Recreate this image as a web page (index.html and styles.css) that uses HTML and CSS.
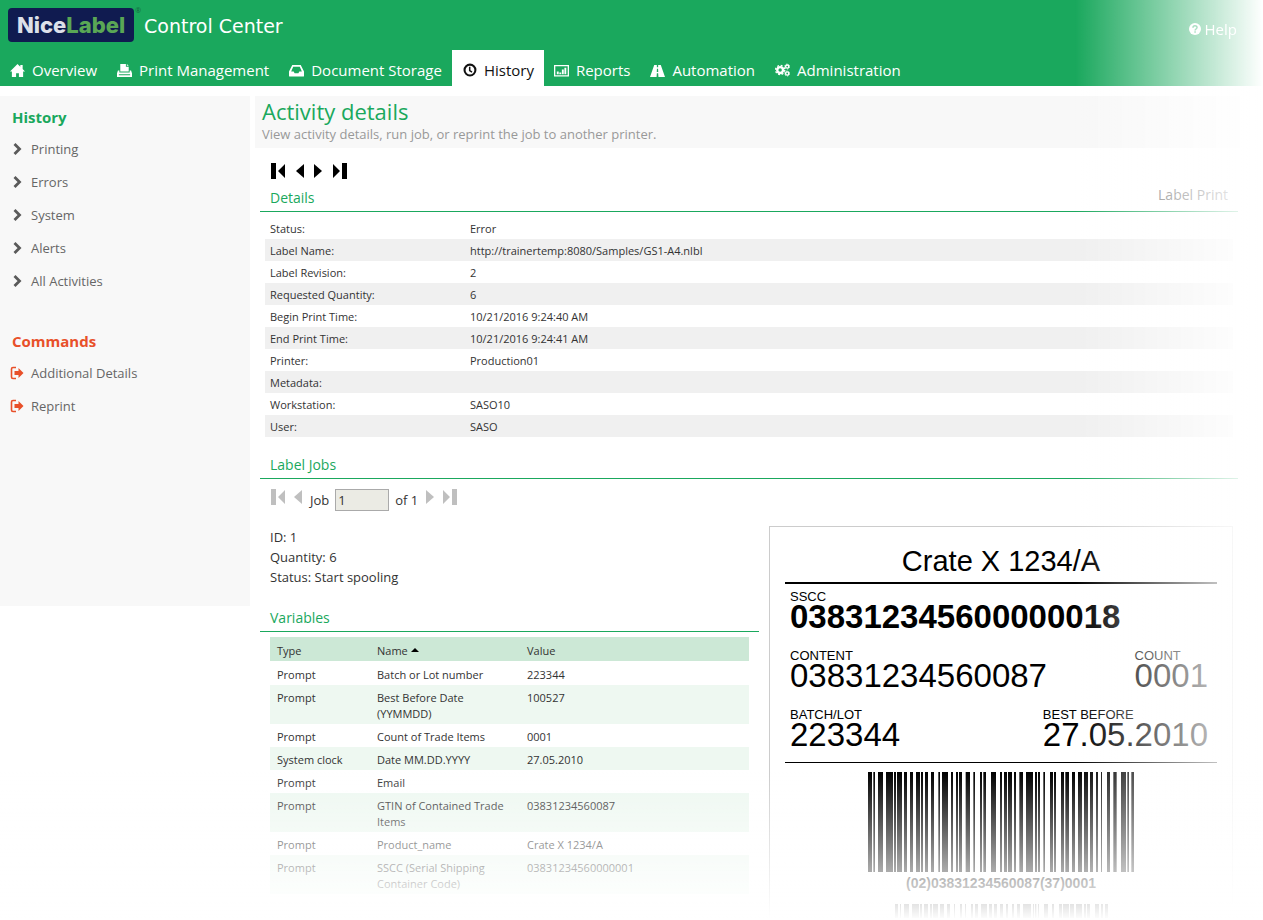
FILE: index.html
```
<!DOCTYPE html>
<html lang="en">
<head>
  <meta charset="UTF-8">
  <title>Control Center - Activity details</title>
  <meta name="viewport" content="width=device-width,initial-scale=1">
  <link rel="stylesheet" href="styles.css">
</head>
<body>
  <header class="header">
    <div class="brand">
      <div class="logo">Nice<span class="logo-accent">Label</span><span class="logo-reg">®</span></div>
      <div class="brand-name">Control Center</div>
      <a class="help" href="#">
        <svg class="help-icon" viewBox="0 0 16 16"><circle cx="8" cy="8" r="8" fill="#fff"/><path d="M5.3 6.2c0-3.4 5.4-3.3 5.4-.2 0 2-2.6 2-2.6 4M8.1 11v2.1" fill="none" stroke="#a9dfc1" stroke-width="2"/></svg>
        Help
      </a>
    </div>
    <nav class="nav">
      <a href="#"><svg viewBox="0 0 16 16"><path d="M8 1l3 3V2h2.500v4.500L16 9h-2v6H9.500v-4h-3v4H2V9H0z"/></svg>Overview</a>
      <a href="#"><svg viewBox="0 0 16 16"><path d="M3.500 1h6v3h3v5h-9zM10.500 1l2 2h-2zM1 8h1.500v2h11V8H15l1 3v4H0v-4zM2 12v1h12v-1z" fill-rule="evenodd"/></svg>Print Management</a>
      <a href="#"><svg viewBox="0 0 16 16"><path d="M3.500 2h9L16 9v4.500c0 .8-.3 1-1 1H1c-.7 0-1-.3-1-1V9zM4.500 4L2.300 9H5l1 2h4l1-2h2.700l-2.200-5z" fill-rule="evenodd"/></svg>Document Storage</a>
      <a href="#" class="active"><svg viewBox="0 0 16 16"><circle cx="8.500" cy="7.500" r="5.800" fill="none" stroke="currentColor" stroke-width="2.200"/><path d="M8.200 4v4l2.500 1.700" fill="none" stroke="currentColor" stroke-width="1.600"/></svg>History</a>
      <a href="#"><svg viewBox="0 0 16 16"><path d="M0 2h16v12.500H0zM1.400 3.400v9.700h13.200V3.400zM3 9h2v3H3zM5.700 10h2v2h-2zM8.400 7h2v5h-2zM11.100 5h2v7h-2z" fill-rule="evenodd"/></svg>Reports</a>
      <a href="#"><svg viewBox="0 0 16 16"><path d="M4.500 2h2.800v2.500h1.400V2h2.800L16 15H9l-.3-4H7.300L7 15H0zM7.400 6l-.2 3.500h1.600L8.600 6z" fill-rule="evenodd"/></svg>Automation</a>
      <a href="#"><svg viewBox="0 0 16 16"><circle cx="5.500" cy="7.500" r="3.100" fill="none" stroke="currentColor" stroke-width="2.600"/><circle cx="5.500" cy="7.500" r="4.900" fill="none" stroke="currentColor" stroke-width="1.500" stroke-dasharray="2 1.850"/><circle cx="13" cy="3.800" r="1.700" fill="none" stroke="currentColor" stroke-width="1.500"/><circle cx="13" cy="3.800" r="2.600" fill="none" stroke="currentColor" stroke-dasharray="1.400 1.320"/><circle cx="13" cy="11.200" r="1.700" fill="none" stroke="currentColor" stroke-width="1.500"/><circle cx="13" cy="11.200" r="2.600" fill="none" stroke="currentColor" stroke-dasharray="1.400 1.320"/></svg>Administration</a>
    </nav>
  </header>

  <!-- icons used more than once -->
  <svg class="defs" width="0" height="0">
    <symbol id="chevron" viewBox="0 0 14 14"><path d="M4.500 2l5 5-5 5" fill="none" stroke="#5a5a5a" stroke-width="2.800"/></symbol>
    <symbol id="out" viewBox="0 0 14 14"><path d="M6 1.500H3Q1.500 1.500 1.500 3v8q0 1.500 1.500 1.500h3" fill="none" stroke="#e8502a" stroke-width="1.600"/><path d="M4.500 5h4V2l5 5-5 5V9h-4z" fill="#e8502a"/></symbol>
    <symbol id="first" viewBox="0 0 15 16"><path d="M0 0h5v16H0zM14 1v14L7 8z"/></symbol>
    <symbol id="prev" viewBox="0 0 8 16"><path d="M8 1v14L0 8z"/></symbol>
    <symbol id="next" viewBox="0 0 8 16"><path d="M0 1v14l8-7z"/></symbol>
    <symbol id="last" viewBox="0 0 15 16"><path d="M15 0h-5v16h5zM1 1v14l7-7z"/></symbol>
  </svg>

  <div class="page">
    <aside class="sidebar">
      <h2 class="side-title">History</h2>
      <ul class="side-list">
        <li><a href="#"><svg><use href="#chevron"/></svg>Printing</a></li>
        <li><a href="#"><svg><use href="#chevron"/></svg>Errors</a></li>
        <li><a href="#"><svg><use href="#chevron"/></svg>System</a></li>
        <li><a href="#"><svg><use href="#chevron"/></svg>Alerts</a></li>
        <li><a href="#"><svg><use href="#chevron"/></svg>All Activities</a></li>
      </ul>
      <h2 class="side-title commands">Commands</h2>
      <ul class="side-list">
        <li><a href="#"><svg><use href="#out"/></svg>Additional Details</a></li>
        <li><a href="#"><svg><use href="#out"/></svg>Reprint</a></li>
      </ul>
    </aside>

    <main class="main">
      <div class="page-head">
        <h1>Activity details</h1>
        <p>View activity details, run job, or reprint the job to another printer.</p>
      </div>

      <div class="content">
        <div class="pager">
          <button type="button" aria-label="First activity"><svg class="wide"><use href="#first"/></svg></button>
          <button type="button" aria-label="Previous activity"><svg><use href="#prev"/></svg></button>
          <button type="button" aria-label="Next activity"><svg><use href="#next"/></svg></button>
          <button type="button" aria-label="Last activity"><svg class="wide"><use href="#last"/></svg></button>
        </div>

        <div class="section-head">
          <h3>Details</h3>
          <span class="kind">Label Print</span>
        </div>
        <table class="details">
          <tr><th>Status:</th><td>Error</td></tr>
          <tr><th>Label Name:</th><td>http://trainertemp:8080/Samples/GS1-A4.nlbl</td></tr>
          <tr><th>Label Revision:</th><td>2</td></tr>
          <tr><th>Requested Quantity:</th><td>6</td></tr>
          <tr><th>Begin Print Time:</th><td>10/21/2016 9:24:40 AM</td></tr>
          <tr><th>End Print Time:</th><td>10/21/2016 9:24:41 AM</td></tr>
          <tr><th>Printer:</th><td>Production01</td></tr>
          <tr><th>Metadata:</th><td></td></tr>
          <tr><th>Workstation:</th><td>SASO10</td></tr>
          <tr><th>User:</th><td>SASO</td></tr>
        </table>

        <div class="section-head">
          <h3>Label Jobs</h3>
        </div>

        <div class="jobs">
          <div class="job">
            <div class="pager job-pager">
              <button type="button" aria-label="First job" disabled><svg class="wide"><use href="#first"/></svg></button>
              <button type="button" aria-label="Previous job" disabled><svg><use href="#prev"/></svg></button>
              <span class="job-no">
                <label for="job">Job</label>
                <input type="text" id="job" value="1">
                <span>of 1</span>
              </span>
              <button type="button" aria-label="Next job" disabled><svg><use href="#next"/></svg></button>
              <button type="button" aria-label="Last job" disabled><svg class="wide"><use href="#last"/></svg></button>
            </div>
            <div class="job-info">
              <div>ID: 1</div>
              <div>Quantity: 6</div>
              <div>Status: Start spooling</div>
            </div>

            <div class="section-head">
              <h3>Variables</h3>
            </div>
            <table class="variables">
              <thead>
                <tr>
                  <th class="col-type">Type</th>
                  <th class="col-name">Name <svg class="sort" viewBox="0 0 8 4"><path d="M4 0l4 4H0z"/></svg></th>
                  <th>Value</th>
                </tr>
              </thead>
              <tbody>
                <tr><td>Prompt</td><td>Batch or Lot number</td><td>223344</td></tr>
                <tr><td>Prompt</td><td>Best Before Date (YYMMDD)</td><td>100527</td></tr>
                <tr><td>Prompt</td><td>Count of Trade Items</td><td>0001</td></tr>
                <tr><td>System clock</td><td>Date MM.DD.YYYY</td><td>27.05.2010</td></tr>
                <tr><td>Prompt</td><td>Email</td><td></td></tr>
                <tr><td>Prompt</td><td>GTIN of Contained Trade Items</td><td>03831234560087</td></tr>
                <tr><td>Prompt</td><td>Product_name</td><td>Crate X 1234/A</td></tr>
                <tr><td>Prompt</td><td>SSCC (Serial Shipping Container Code)</td><td>03831234560000001</td></tr>
              </tbody>
            </table>
          </div>

          <div class="preview">
            <div class="preview-title">Crate X 1234/A</div>
            <div class="preview-body">
              <div class="preview-row">
                <div class="field"><span>SSCC</span><b>038312345600000018</b></div>
              </div>
              <div class="preview-row">
                <div class="field"><span>CONTENT</span>03831234560087</div>
                <div class="field"><span>COUNT</span>0001</div>
              </div>
              <div class="preview-row">
                <div class="field"><span>BATCH/LOT</span>223344</div>
                <div class="field"><span>BEST BEFORE</span>27.05.2010</div>
              </div>
            </div>
            <svg class="barcode" viewBox="0 0 798 300" preserveAspectRatio="none"><path d="M0 0h12v300h-12zM16 0h5v300h-5zM30 0h15v300h-15zM54 0h21v300h-21zM78 0h6v300h-6zM87 0h15v300h-15zM108 0h9v300h-9zM126 0h9v300h-9zM144 0h12v300h-12zM159 0h6v300h-6zM171 0h9v300h-9zM189 0h9v300h-9zM211 0h5v300h-5zM222 0h18v300h-18zM249 0h6v300h-6zM264 0h6v300h-6zM273 0h9v300h-9zM293 0h13v300h-13zM316 0h5v300h-5zM336 0h6v300h-6zM346 0h8v300h-8zM369 0h15v300h-15zM396 0h6v300h-6zM408 0h9v300h-9zM420 0h12v300h-12zM438 0h6v300h-6zM454 0h11v300h-11zM474 0h21v300h-21zM501 0h6v300h-6zM510 0h6v300h-6zM526 0h5v300h-5zM546 0h9v300h-9zM558 0h6v300h-6zM579 0h9v300h-9zM592 0h11v300h-11zM612 0h9v300h-9zM630 0h12v300h-12zM648 0h12v300h-12zM666 0h9v300h-9zM684 0h6v300h-6zM699 0h3v300h-3zM717 0h9v300h-9zM736 0h10v300h-10zM759 0h15v300h-15zM778 0h5v300h-5zM790 0h8v300h-8z"/></svg>
            <div class="barcode-text">(02)03831234560087(37)0001</div>
            <svg class="barcode second" viewBox="0 0 639 45" preserveAspectRatio="none"><path d="M0 0h9v45h-9zM15 0h3v45h-3zM27 0h15v45h-15zM51 0h21v45h-21zM75 0h6v45h-6zM87 0h12v45h-12zM105 0h6v45h-6zM114 0h15v45h-15zM135 0h12v45h-12zM156 0h9v45h-9zM177 0h3v45h-3zM195 0h6v45h-6zM210 0h3v45h-3zM228 0h6v45h-6zM240 0h9v45h-9zM258 0h18v45h-18zM282 0h9v45h-9zM297 0h9v45h-9zM315 0h9v45h-9zM333 0h6v45h-6zM351 0h6v45h-6zM366 0h9v45h-9zM384 0h24v45h-24zM414 0h3v45h-3zM420 0h4v45h-4zM429 0h3v45h-3zM447 0h12v45h-12zM471 0h6v45h-6zM492 0h9v45h-9zM504 0h18v45h-18zM525 0h12v45h-12zM543 0h18v45h-18zM567 0h6v45h-6zM576 0h9v45h-9zM600 0h12v45h-12zM618 0h6v45h-6zM630 0h9v45h-9z"/></svg>
          </div>
        </div>
      </div>
    </main>
  </div>

  <div class="fade-right"></div>
  <div class="fade-bottom"></div>
</body>
</html>
```
FILE: styles.css
```
* { box-sizing: border-box; }
body { margin: 0; height: 100vh; overflow: hidden; background: #fff; color: #333; font: 13px/20px "Open Sans", "Noto Sans", sans-serif; }
h1, h2, h3, p, ul { margin: 0; padding: 0; font-weight: 400; }
ul { list-style: none; }
a { color: inherit; text-decoration: none; }
button { background: none; border: none; padding: 0; cursor: pointer; }
button svg { display: block; }
.defs { position: absolute; }

/* header */
.header { background: #1aa85d; color: #fff; }
.brand { display: flex; align-items: center; height: 50px; padding: 0 26px 0 8px; }
.logo { position: relative; width: 126px; height: 34px; border-radius: 4px; background: #101b50; color: #dde0ea; font: 800 22px/34px Inter, sans-serif; text-align: center; }
.logo-accent { color: #5aa755; }
.logo-reg { position: absolute; top: 0; right: -7px; color: #14663f; font: 7px/6px "Open Sans", sans-serif; }
.brand-name { margin-left: 10px; padding-top: 2px; font: 19px/34px "DejaVu Sans", sans-serif; }
.help { display: flex; align-items: center; gap: 4px; margin: 8px 0 0 auto; font-size: 15px; position: relative; z-index: 11; }
.help-icon { width: 12px; height: 12px; }
.nav { display: flex; height: 36px; }
.nav a { display: flex; align-items: center; gap: 7px; padding: 4px 10px 0; font-size: 15px; white-space: nowrap; }
.nav svg { width: 15px; height: 15px; fill: currentColor; }
.nav .active { background: #fff; color: #111; }

.page { display: flex; align-items: flex-start; gap: 5px; padding-top: 10px; }

/* sidebar */
.sidebar { flex: none; width: 250px; min-height: 510px; padding-top: 8px; background: #f8f8f8; }
.side-title { padding: 0 0 2px 12px; color: #1aa85d; font-size: 15px; font-weight: 700; line-height: 26px; }
.side-title.commands { margin-top: 31px; color: #e8502a; }
.side-list a { display: flex; align-items: center; gap: 7px; height: 33px; padding-left: 10px; color: #666; font-size: 13px; }
.side-list svg { width: 14px; height: 14px; }

/* main */
.main { flex: 1; min-width: 0; }
.page-head { height: 52px; padding: 0 7px; background: #f8f8f8; }
.page-head h1 { color: #1aa85d; font-size: 22px; line-height: 30px; }
.page-head p { color: #999; font-size: 13px; line-height: 16px; }
.content { padding: 15px 25px 0 5px; }
.pager { display: flex; align-items: center; gap: 10px; height: 16px; margin-left: 11px; }
.pager svg { width: 8px; height: 16px; fill: #000; }
.pager .wide { width: 15px; }
.pager button:disabled svg { fill: #bfbfbf; }

.section-head { display: flex; justify-content: space-between; padding: 0 10px 2px; border-bottom: 1px solid #1aa85d; line-height: 22px; }
.section-head h3 { color: #1aa85d; font-size: 14px; }
.pager + .section-head { margin-top: 8px; }
.kind { color: #666; font-size: 14px; line-height: 16px; }

.details { width: calc(100% - 10px); margin: 5px 5px 17px; border-collapse: collapse; font-size: 11px; }
.details th, .details td { height: 22px; padding: 2px 5px 0; text-align: left; font-weight: 400; }
.details th { width: 200px; }
.details tr:nth-child(even) { background: #f0f0f0; }

.jobs { display: grid; grid-template-columns: 499fr 464fr; gap: 10px; padding-right: 5px; }
.job-pager { gap: 8px; height: 22px; margin-top: 10px; align-items: flex-start; }
.job-no { display: flex; align-items: center; gap: 6px; height: 22px; }
.job-no input { width: 54px; height: 22px; padding: 0 2px; border: 1px solid #aaa; background: #ebebe4; color: #333; font: inherit; }
.job-info { margin: 16px 0 20px; padding-left: 10px; }

.variables { width: calc(100% - 20px); margin: 5px 10px; border-collapse: collapse; table-layout: fixed; font-size: 11px; line-height: 16px; }
.variables th, .variables td { padding: 5px 7px 2px; text-align: left; vertical-align: top; font-weight: 400; }
.variables th { padding-top: 6px; background: #cce8d6; border-bottom: 1px solid #fff; }
.variables .col-type { width: 100px; }
.variables .col-name { width: 150px; }
.variables tbody tr:nth-child(even) { background: #eef8f1; }
.sort { width: 8px; height: 4px; vertical-align: 3px; }

/* label preview */
.preview { margin-top: 47px; height: 420px; padding: 15px; border: 1px solid #ccc; color: #000; font-family: "Liberation Sans", Arial, sans-serif; }
.preview-title { height: 42px; border-bottom: 2px solid #000; font-size: 29px; line-height: 38px; text-align: center; }
.preview-body { height: 179px; padding: 6px 9px 0 5px; border-bottom: 1px solid #000; }
.preview-row { display: flex; justify-content: space-between; height: 59px; }
.field { font-size: 33px; line-height: 28px; }
.field span { display: block; font-size: 13px; line-height: 13px; }
.barcode { display: block; width: 266px; height: 100px; margin: 9px auto 0; }
.barcode-text { margin-top: 3px; font-size: 14px; font-weight: 700; line-height: 16px; text-align: center; }
.barcode.second { width: 213px; height: 14px; margin-top: 13px; }

/* page fades out to the right and to the bottom */
.fade-right, .fade-bottom { position: fixed; right: 0; bottom: 0; z-index: 10; pointer-events: none; }
.fade-right { top: 0; width: 188px; background: linear-gradient(to right, rgba(255,255,255,0), #fff); }
.fade-bottom { left: 0; height: 148px; background: linear-gradient(to bottom, rgba(255,255,255,0), #fff); }
```
